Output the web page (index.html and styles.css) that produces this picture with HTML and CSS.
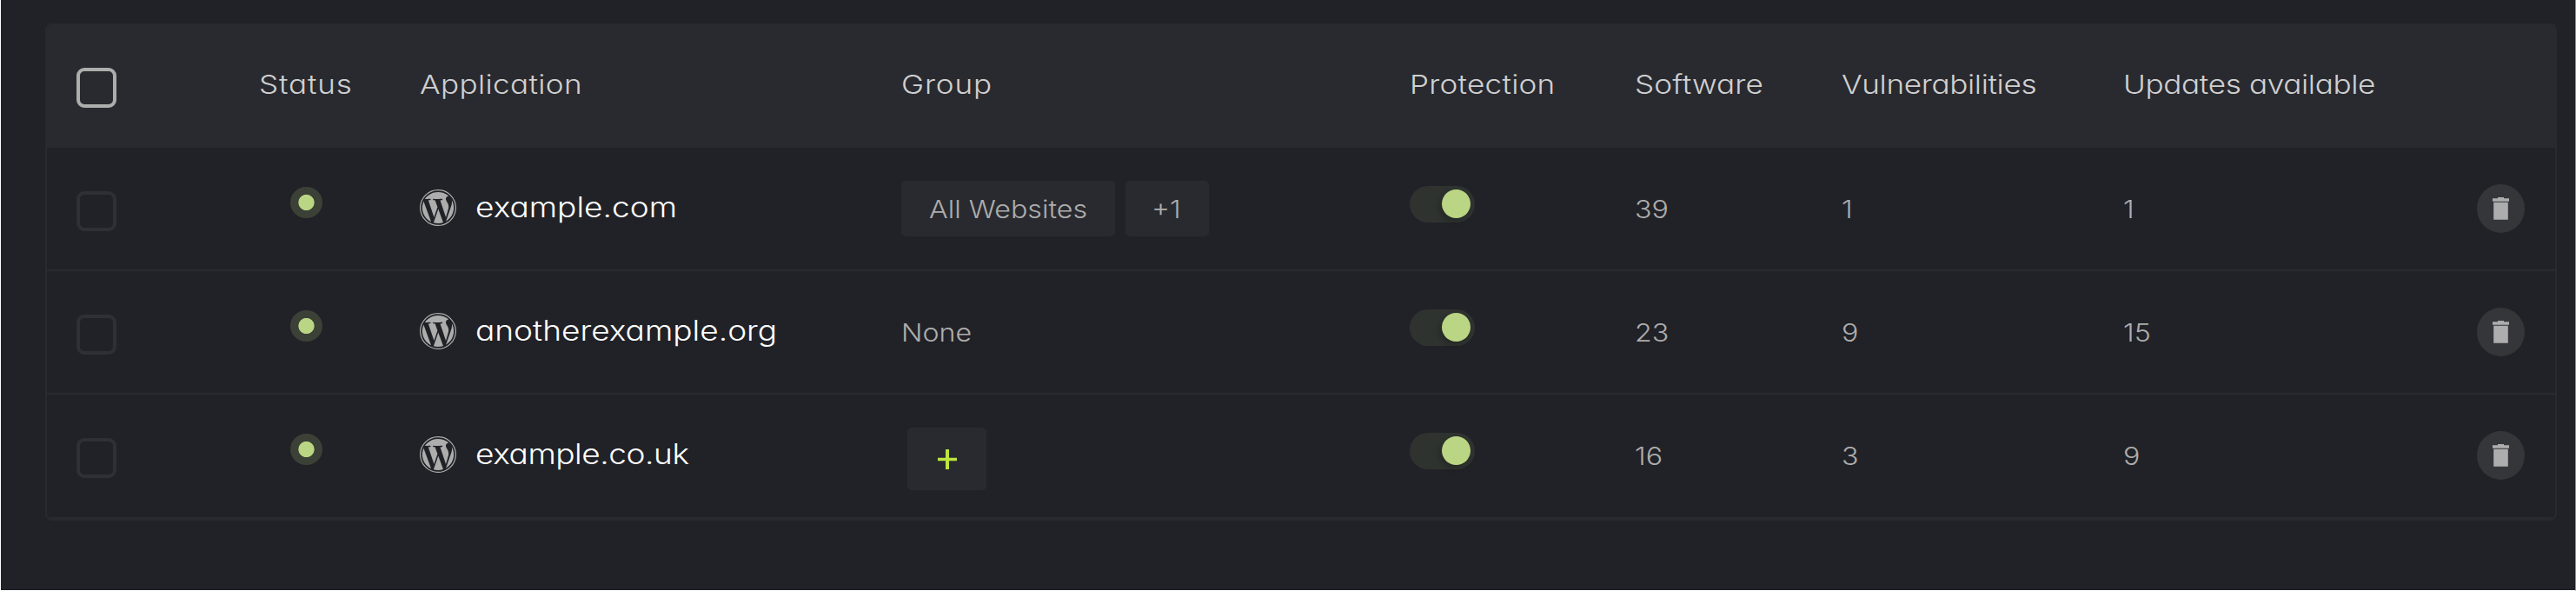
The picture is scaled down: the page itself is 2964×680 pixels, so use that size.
FILE: index.html
```html
<!DOCTYPE html>
<html lang="en">
<head>
<meta charset="utf-8">
<title>Applications</title>
<link rel="stylesheet" href="styles.css">
</head>
<body>
<svg class="defs" aria-hidden="true">
  <symbol id="wp" viewBox="0 0 24 24">
    <circle cx="12" cy="12" r="11.65" fill="none" stroke="currentColor" stroke-width=".7"/>
    <path fill="currentColor" transform="translate(.5 .5) scale(.958)" d="M21.469 6.825c.84 1.537 1.318 3.3 1.318 5.175 0 3.979-2.156 7.456-5.363 9.325l3.295-9.527c.615-1.54.82-2.771.82-3.864 0-.405-.026-.78-.07-1.11m-7.981.105c.647-.03 1.232-.105 1.232-.105.582-.075.514-.93-.067-.899 0 0-1.755.135-2.88.135-1.064 0-2.85-.15-2.85-.15-.585-.03-.661.855-.075.885 0 0 .54.061 1.125.09l1.68 4.605-2.37 7.08L5.354 6.9c.649-.03 1.234-.1 1.234-.1.585-.075.516-.93-.065-.896 0 0-1.746.138-2.874.138-.2 0-.438-.008-.69-.015C4.911 3.15 8.235 1.215 12 1.215c2.809 0 5.365 1.072 7.286 2.833-.046-.003-.091-.009-.141-.009-1.06 0-1.812.923-1.812 1.914 0 .89.513 1.643 1.06 2.531.411.72.89 1.643.89 2.977 0 .915-.354 1.994-.821 3.479l-1.075 3.585-3.9-11.61zM12 22.784c-1.059 0-2.081-.153-3.048-.437l3.237-9.406 3.315 9.087c.024.053.05.101.078.149-1.12.393-2.325.609-3.582.609M1.211 12c0-1.564.336-3.05.935-4.39L7.29 21.709C3.694 19.96 1.212 16.271 1.211 12"/>
  </symbol>
  <symbol id="trash" viewBox="0 0 19 26">
    <path fill="currentColor" d="M6 0h7v1.300h6v3.500H0V1.300h6zM1.200 5.800h16.600v20H1.200z"/>
  </symbol>
</svg>
<main class="table">
  <div class="row head">
    <span class="check"></span>
    <span class="label status-label">Status</span>
    <span class="label application-label">Application</span>
    <span class="label group-label">Group</span>
    <span class="label protection-label">Protection</span>
    <span class="label software-label">Software</span>
    <span class="label long-label">Vulnerabilities</span>
    <span class="label long-label">Updates available</span>
  </div>
  <div class="row">
    <span class="check"></span>
    <span class="status"></span>
    <div class="app"><svg class="wp"><use href="#wp"/></svg><span class="name">example.com</span></div>
    <div class="groups"><span class="chip all"><span class="value">All Websites</span></span><span class="chip more"><span class="value">+1</span></span></div>
    <span class="toggle"></span>
    <span class="value">39</span>
    <span class="value">1</span>
    <span class="value">1</span>
    <button class="delete" aria-label="Delete"><svg class="trash"><use href="#trash"/></svg></button>
  </div>
  <div class="row">
    <span class="check"></span>
    <span class="status"></span>
    <div class="app"><svg class="wp"><use href="#wp"/></svg><span class="name">anotherexample.org</span></div>
    <span class="value none">None</span>
    <span class="toggle"></span>
    <span class="value">23</span>
    <span class="value">9</span>
    <span class="value">15</span>
    <button class="delete" aria-label="Delete"><svg class="trash"><use href="#trash"/></svg></button>
  </div>
  <div class="row last">
    <span class="check"></span>
    <span class="status"></span>
    <div class="app"><svg class="wp"><use href="#wp"/></svg><span class="name tight">example.co.uk</span></div>
    <button class="add" aria-label="Add group"><svg class="plus" viewBox="0 0 22 23"><path d="M9 0h4v9.700h9v3.500h-9V23H9v-9.800H0V9.700h9z" fill="#bde53f"/></svg></button>
    <span class="toggle"></span>
    <span class="value">16</span>
    <span class="value">3</span>
    <span class="value">9</span>
    <button class="delete" aria-label="Delete"><svg class="trash"><use href="#trash"/></svg></button>
  </div>
</main>
</body>
</html>
```
FILE: styles.css
```css
* { box-sizing: border-box; }
html { background: #212227; }
body {
  margin: 0;
  height: 680px;
  padding: 27px 20px 0 51px;
  overflow: hidden;
  border: solid #fff;
  border-width: 0 1px 1px;
  border-right-color: #909090;
  background: #212227;
  font-family: Inter, "Open Sans", sans-serif;
  font-feature-settings: "cv11";
  font-weight: 320;
}
button { border: 0; padding: 0; }
.defs { position: absolute; width: 0; height: 0; }
.table {
  width: 2890px;
  border: 2px solid #292a2f;
  border-radius: 8px;
  overflow: hidden;
}
.row {
  display: grid;
  grid-template-columns: 212px 183px 553px 586px 259px 238px 324px 407px 55px;
  align-items: center;
  justify-items: start;
  height: 142px;
  padding-left: 34px;
  border-bottom: 2px solid #292a2f;
}
.head { height: 141px; padding-bottom: 3px; background: #292a2f; border: 0; }
.last { height: 143px; padding-bottom: 1px; }
.check {
  width: 46px;
  height: 46px;
  margin-top: 6px;
  border: 4px solid #2e3035;
  border-radius: 9px;
}
.head .check { border-color: #adadad; }
.label, .value, .name {
  display: inline-block;
  white-space: nowrap;
  transform-origin: 0 50%;
}
.label {
  margin-bottom: 2px;
  font-size: 30px;
  color: #d0d0d1;
  transform: scaleX(1.17);
}
.status-label { margin-left: -2px; letter-spacing: .7px; }
.application-label { letter-spacing: .3px; }
.group-label { margin-left: 1px; letter-spacing: .7px; }
.protection-label { letter-spacing: .2px; }
.software-label { letter-spacing: .1px; }
.long-label { letter-spacing: -.3px; }
.value {
  margin-top: 1px;
  font-size: 28px;
  color: #adadad;
  transform: scaleX(1.15);
}
.name {
  font-size: 32px;
  font-weight: 350;
  color: #fff;
  transform: scaleX(1.158);
}
.tight { letter-spacing: -.4px; }
.none { margin-left: 1px; }
.status {
  width: 37px;
  height: 36px;
  margin: 0 0 14px 34px;
  border-radius: 50%;
  background: radial-gradient(circle, #bad583 8.700px, #3b4136 9.500px);
}
.app { display: flex; align-items: center; gap: 22px; margin-bottom: 3px; }
.wp { width: 42px; height: 42px; color: #adadad; }
.groups { display: flex; gap: 12px; margin-left: 1px; }
.chip {
  display: flex;
  align-items: center;
  height: 64px;
  border-radius: 5px;
  background: #292a2f;
}
.all { width: 246px; padding-left: 32px; }
.more { width: 96px; padding-left: 30px; }
.toggle {
  display: flex;
  align-items: center;
  justify-content: flex-end;
  width: 75px;
  height: 42px;
  margin-bottom: 11px;
  padding-right: 5px;
  border-radius: 21px;
  background: #2f332f;
}
.toggle::before {
  content: "";
  width: 33px;
  height: 33px;
  border-radius: 50%;
  background: #bad583;
  box-shadow: -3px 4px 6px rgba(0, 0, 0, .2);
}
.delete {
  display: grid;
  place-items: center;
  width: 55px;
  height: 56px;
  border-radius: 50%;
  background: #35363a;
}
.trash { width: 19px; height: 26px; color: #adadad; }
.add {
  display: grid;
  place-items: center;
  width: 91px;
  height: 72px;
  margin: 8px 0 0 8px;
  border-radius: 5px;
  background: #292a2f;
}
.plus { width: 22px; height: 23px; }
```
